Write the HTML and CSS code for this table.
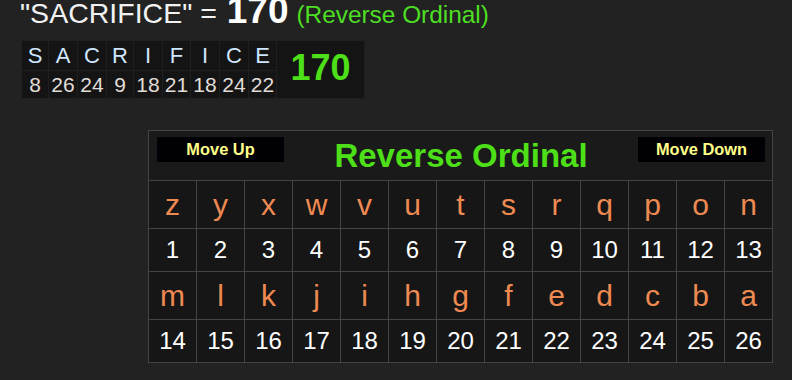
FILE: index.html
```html
<!DOCTYPE html>
<html>
<head>
<meta charset="utf-8">
<link rel="stylesheet" href="styles.css">
</head>
<body>
<div class="title"><span class="word">"SACRIFICE" =</span> <span class="total">170</span> <span class="cipher">(Reverse Ordinal)</span></div>

<div class="breakdown">
  <div class="bl">S</div><div class="bl">A</div><div class="bl">C</div><div class="bl">R</div><div class="bl">I</div><div class="bl">F</div><div class="bl">I</div><div class="bl">C</div><div class="bl">E</div>
  <div class="bsum">170</div>
  <div class="bn">8</div><div class="bn">26</div><div class="bn">24</div><div class="bn">9</div><div class="bn">18</div><div class="bn">21</div><div class="bn">18</div><div class="bn">24</div><div class="bn">22</div>
</div>

<div class="chart">
  <div class="chart-head">
    <div class="btn">Move Up</div>
    <div class="chart-title">Reverse Ordinal</div>
    <div class="btn">Move Down</div>
  </div>
  <div class="grid">
    <div class="l">z</div><div class="l">y</div><div class="l">x</div><div class="l">w</div><div class="l">v</div><div class="l">u</div><div class="l">t</div><div class="l">s</div><div class="l">r</div><div class="l">q</div><div class="l">p</div><div class="l">o</div><div class="l">n</div>
    <div class="n">1</div><div class="n">2</div><div class="n">3</div><div class="n">4</div><div class="n">5</div><div class="n">6</div><div class="n">7</div><div class="n">8</div><div class="n">9</div><div class="n">10</div><div class="n">11</div><div class="n">12</div><div class="n">13</div>
    <div class="l">m</div><div class="l">l</div><div class="l">k</div><div class="l">j</div><div class="l">i</div><div class="l">h</div><div class="l">g</div><div class="l">f</div><div class="l">e</div><div class="l">d</div><div class="l">c</div><div class="l">b</div><div class="l">a</div>
    <div class="n">14</div><div class="n">15</div><div class="n">16</div><div class="n">17</div><div class="n">18</div><div class="n">19</div><div class="n">20</div><div class="n">21</div><div class="n">22</div><div class="n">23</div><div class="n">24</div><div class="n">25</div><div class="n">26</div>
  </div>
</div>
</body>
</html>
```

FILE: styles.css
```css
html, body {
  margin: 0;
  padding: 0;
  background: #222222;
  font-family: "Liberation Sans", Arial, sans-serif;
  overflow: hidden;
}

.title {
  margin: -3px 0 0 20px;
  font-size: 28.5px;
  line-height: 28px;
  color: #f2f2f2;
  white-space: nowrap;
}
.title span { line-height: 28px; }
.title .total {
  font-size: 37px;
  font-weight: bold;
  color: #ffffff;
  margin-left: 2px;
}
.title .cipher {
  font-size: 24.4px;
  color: #4ddf22;
}

.breakdown {
  display: grid;
  grid-template-columns: 26px 28px 28px 26px 28px 27px 28px 28px 27px 87px;
  grid-template-rows: 29px 27px;
  gap: 1px;
  padding: 1px;
  width: max-content;
  margin: 11px 0 0 21px;
  background: #1f1f1f;
}
.bl, .bn, .bsum {
  background: #141414;
  display: flex;
  align-items: center;
  justify-content: center;
}
.bl {
  font-size: 22px;
  color: #cfe6ff;
}
.bn {
  font-size: 21px;
  color: #e0ddd8;
}
.bsum {
  grid-column: 10;
  grid-row: 1 / span 2;
  font-size: 36px;
  font-weight: bold;
  color: #4ddf18;
  padding-bottom: 3px;
}

.chart {
  margin: 31px 0 0 148px;
  width: max-content;
  border: 1px solid #444444;
  background: #1a1a1a;
}
.chart-head {
  height: 50px;
  box-sizing: border-box;
  padding: 6px 7px 0 8px;
  display: grid;
  grid-template-columns: 127px 1fr 127px;
  border-bottom: 1px solid #444444;
}
.btn {
  height: 25px;
  line-height: 25px;
  background: #000005;
  color: #ffff88;
  font-size: 16.4px;
  font-weight: bold;
  text-align: center;
}
.chart-title {
  text-align: center;
  font-size: 33px;
  font-weight: bold;
  color: #4ddf18;
  line-height: 38px;
  margin-top: 0;
}
.grid {
  display: grid;
  grid-template-columns: repeat(13, 47px);
  grid-template-rows: 47px 42px 47px 42px;
  gap: 1px;
  background: #444444;
}
.l, .n {
  background: #161616;
  display: flex;
  align-items: center;
  justify-content: center;
}
.l {
  font-size: 30px;
  color: #ef8a52;
}
.n {
  font-size: 24px;
  color: #ffffff;
}
```
